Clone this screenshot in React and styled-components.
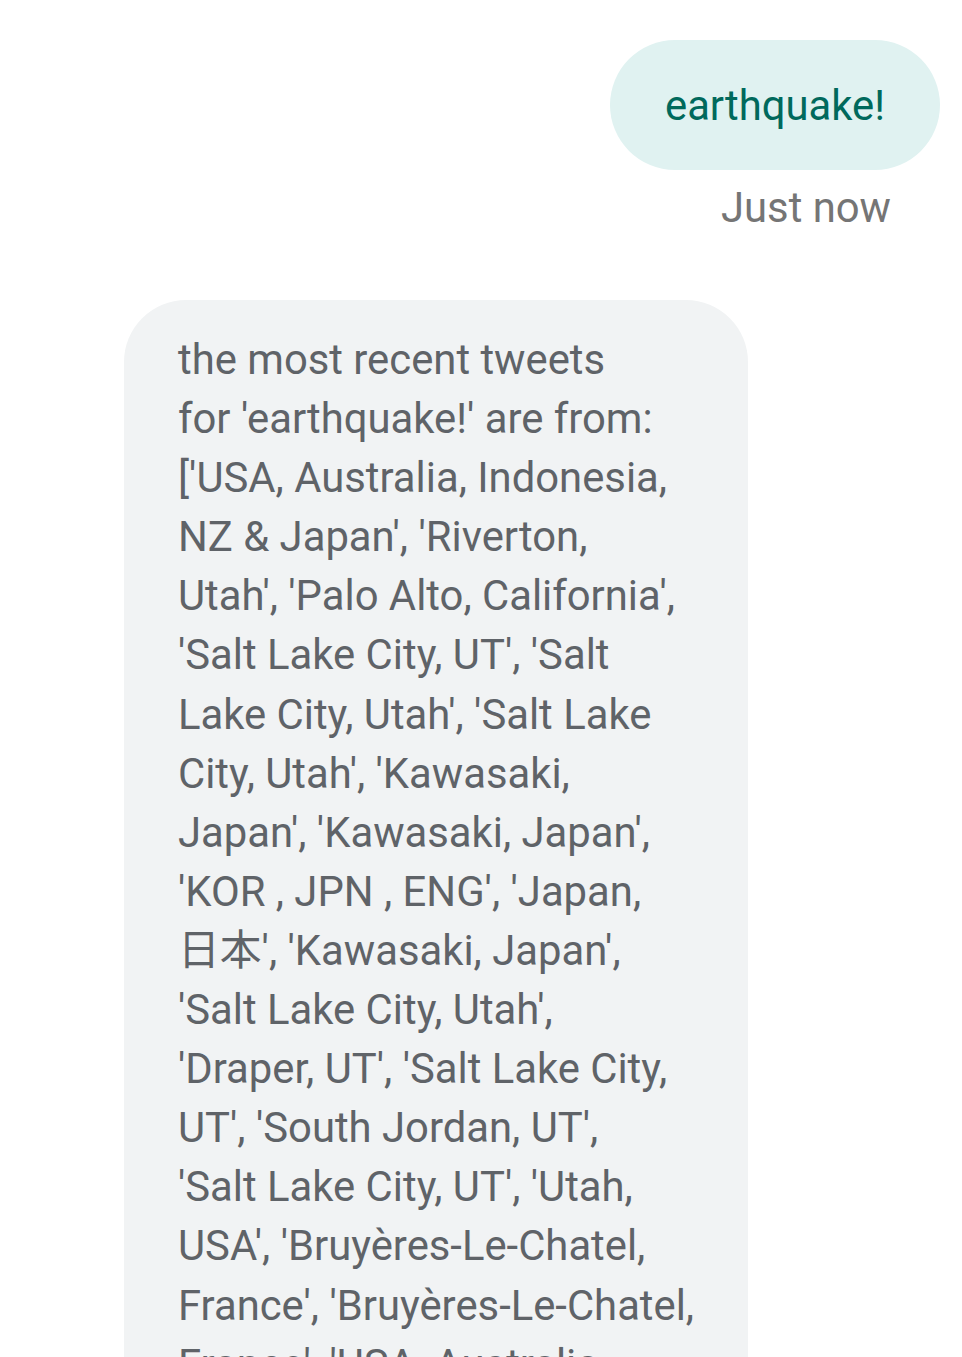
import React from 'react';
import styled, { createGlobalStyle } from 'styled-components';

const GlobalStyle = createGlobalStyle`
  html, body {
    margin: 0;
    padding: 0;
    background: #ffffff;
  }
  body {
    font-family: Roboto, "Noto Sans CJK JP", sans-serif;
  }
`;

const ChatScreen = styled.div`
  width: 962px;
  height: 1357px;
  overflow: hidden;
  background: #ffffff;
  padding-top: 40px;
  box-sizing: border-box;
`;

const OutgoingRow = styled.div`
  display: flex;
  justify-content: flex-end;
  padding-right: 22px;
`;

const OutgoingBubble = styled.div`
  display: flex;
  align-items: center;
  height: 130px;
  padding: 0 55px;
  border-radius: 65px;
  background: #e0f2f1;
  color: #00695c;
  font-size: 41.8px;
`;

const Timestamp = styled.div`
  text-align: right;
  padding-right: 71px;
  margin-top: 13px;
  font-size: 41.8px;
  line-height: 50px;
  color: #757575;
`;

const IncomingRow = styled.div`
  display: flex;
  margin-top: 67px;
  padding-left: 124px;
`;

const IncomingBubble = styled.div`
  width: 624px;
  box-sizing: border-box;
  padding: 30px 53px 60px 54px;
  border-radius: 62px;
  background: #f1f3f4;
  color: #5f6368;
  font-size: 41.8px;
  line-height: 59.1px;
  white-space: pre;
`;

const replyLines = [
  'the most recent tweets',
  "for 'earthquake!' are from:",
  "['USA, Australia, Indonesia,",
  "NZ & Japan', 'Riverton,",
  "Utah', 'Palo Alto, California',",
  "'Salt Lake City, UT', 'Salt",
  "Lake City, Utah', 'Salt Lake",
  "City, Utah', 'Kawasaki,",
  "Japan', 'Kawasaki, Japan',",
  "'KOR , JPN , ENG', 'Japan,",
  "日本', 'Kawasaki, Japan',",
  "'Salt Lake City, Utah',",
  "'Draper, UT', 'Salt Lake City,",
  "UT', 'South Jordan, UT',",
  "'Salt Lake City, UT', 'Utah,",
  "USA', 'Bruyères-Le-Chatel,",
  "France', 'Bruyères-Le-Chatel,",
  "France', 'USA, Australia,",
  "Indonesia, NZ & Japan']",
];

export default function App() {
  return (
    <>
      <GlobalStyle />
      <ChatScreen>
        <OutgoingRow>
          <OutgoingBubble>earthquake!</OutgoingBubble>
        </OutgoingRow>
        <Timestamp>Just now</Timestamp>
        <IncomingRow>
          <IncomingBubble>{replyLines.join('\n')}</IncomingBubble>
        </IncomingRow>
      </ChatScreen>
    </>
  );
}
